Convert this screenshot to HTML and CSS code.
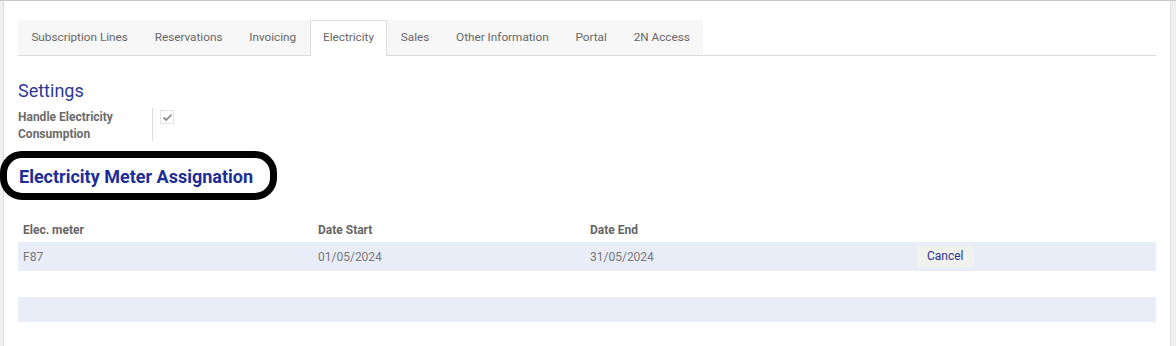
FILE: index.html
```html
<!DOCTYPE html>
<html>
<head>
<meta charset="utf-8">
<link rel="stylesheet" href="styles.css">
</head>
<body>
<div class="frame">
  <div class="edge-left"></div>
  <main class="sheet">
    <nav class="tabs">
      <div class="tab">Subscription Lines</div>
      <div class="tab">Reservations</div>
      <div class="tab">Invoicing</div>
      <div class="tab active">Electricity</div>
      <div class="tab">Sales</div>
      <div class="tab">Other Information</div>
      <div class="tab">Portal</div>
      <div class="tab">2N Access</div>
    </nav>
    <h2 class="settings-title">Settings</h2>
    <div class="field">
      <div class="field-label">Handle Electricity<br>Consumption</div>
      <div class="field-value">
        <span class="check">
          <svg width="11" height="9" viewBox="0 0 11 9"><path d="M1.5 4.5 L4.2 7 L9.5 1.5" fill="none" stroke="#8a8a8a" stroke-width="1.8"/></svg>
        </span>
      </div>
    </div>
    <div class="section-head">
      <h3 class="section-title">Electricity Meter Assignation</h3>
      <div class="annotation"></div>
    </div>
    <div class="table">
      <div class="row head">
        <div class="c1">Elec. meter</div>
        <div class="c2">Date Start</div>
        <div class="c3">Date End</div>
        <div class="c4"></div>
      </div>
      <div class="row data">
        <div class="c1">F87</div>
        <div class="c2">01/05/2024</div>
        <div class="c3">31/05/2024</div>
        <div class="c4"><span class="btn">Cancel</span></div>
      </div>
      <div class="row blank"></div>
      <div class="row tint"></div>
    </div>
  </main>
  <div class="edge-right"></div>
</div>
</body>
</html>
```
FILE: styles.css
```css
html, body {
  margin: 0;
  padding: 0;
  background: #fff;
}
body {
  font-family: Roboto, "Liberation Sans", sans-serif;
  font-size: 12px;
  color: #666;
}
.frame {
  display: flex;
  height: 345px;
  border-top: 1px solid #c9c9c9;
  overflow: hidden;
}
.edge-left {
  width: 3px;
  background: #f0f0f0;
  border-right: 1px solid #dcdcdc;
}
.edge-right {
  width: 5px;
  background: #efefef;
  border-left: 1px solid #e2e2e2;
}
.sheet {
  flex: 1;
  padding: 19px 14px 0 14px;
  position: relative;
}
.tabs {
  display: flex;
  height: 35px;
  border-bottom: 1px solid #dcdcdc;
}
.tab {
  display: flex;
  align-items: center;
  padding: 0 12.4px 2px 12.4px;
  border: 1px solid transparent;
  border-bottom: none;
  background: #f7f7f7;
  color: #666;
  font-size: 11.75px;
  height: 35px;
  box-sizing: border-box;
}
.tab.active {
  background: #fff;
  border-color: #dcdcdc;
  height: 36px;
  margin-bottom: -1px;
  padding-bottom: 3px;
}
.settings-title {
  margin: 24px 0 0 0;
  font-size: 18px;
  font-weight: 400;
  line-height: 22px;
  color: #2b3a94;
}
.field {
  display: flex;
  margin-top: 7px;
}
.field-label {
  width: 134px;
  font-weight: 700;
  line-height: 17px;
  color: #6b6b6b;
}
.field-value {
  border-left: 1px solid #dcdcdc;
  height: 33px;
  margin-top: -1px;
  padding-left: 7px;
  padding-top: 2px;
  box-sizing: border-box;
}
.check {
  display: flex;
  align-items: center;
  justify-content: center;
  width: 12px;
  height: 12px;
  border: 1px solid #e3e3e3;
}
.section-head {
  position: relative;
  margin-top: 23px;
  height: 40px;
}
.section-title {
  margin: 0;
  padding-left: 1px;
  font-size: 18px;
  font-weight: 700;
  line-height: 22px;
  color: #1c2e96;
}
.annotation {
  position: absolute;
  left: -18px;
  top: -15px;
  width: 263px;
  height: 35px;
  border: 7px solid #000;
  border-radius: 22px;
}
.table {
  margin-top: 12px;
}
.row {
  display: flex;
  align-items: center;
}
.row > div {
  padding-left: 5px;
  box-sizing: border-box;
}
.c1 { width: 295px; }
.c2 { width: 272px; }
.c3 { width: 327px; }
.c4 { flex: 1; }
.head {
  height: 24px;
  font-weight: 700;
  color: #666;
}
.data {
  height: 29px;
  background: #e9edf8;
  color: #777;
}
.blank { height: 26px; }
.tint {
  height: 25px;
  background: #e9edf8;
}
.btn {
  display: inline-block;
  background: #f1f2ee;
  color: #2a3190;
  padding: 3px 10px;
  border-radius: 3px;
  line-height: 15px;
}
```
